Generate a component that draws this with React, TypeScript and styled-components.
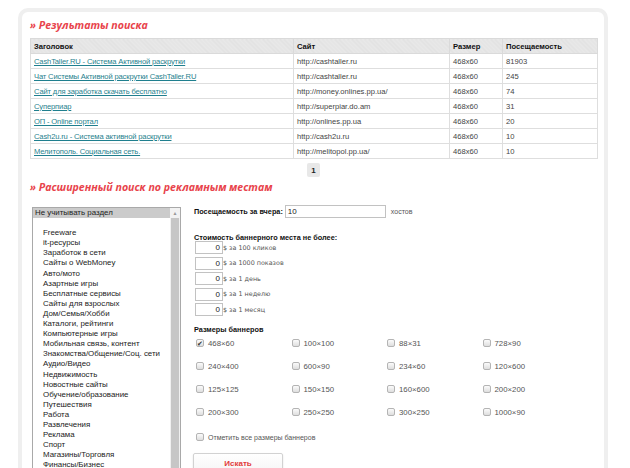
import styled, { createGlobalStyle } from 'styled-components'

const GlobalStyle = createGlobalStyle`
  html, body {
    margin: 0;
    padding: 0;
    background: #ffffff;
    overflow: hidden;
  }
  body {
    font-family: "Liberation Sans", Arial, sans-serif;
    color: #222;
  }
`

const results = [
  { title: 'CashTaller.RU - Система Активной раскрутки', site: 'http://cashtaller.ru', size: '468x60', visits: '81903' },
  { title: 'Чат Системы Активной раскрутки CashTaller.RU', site: 'http://cashtaller.ru', size: '468x60', visits: '245' },
  { title: 'Сайт для заработка скачать бесплатно', site: 'http://money.onlines.pp.ua/', size: '468x60', visits: '74' },
  { title: 'Суперпиар', site: 'http://superpiar.do.am', size: '468x60', visits: '31' },
  { title: 'ОП - Online портал', site: 'http://onlines.pp.ua', size: '468x60', visits: '20' },
  { title: 'Cash2u.ru - Система активной раскрутки', site: 'http://cash2u.ru', size: '468x60', visits: '10' },
  { title: 'Мелитополь. Социальная сеть.', site: 'http://melitopol.pp.ua/', size: '468x60', visits: '10' },
]

const categories = [
  'Freeware', 'it-ресурсы', 'Заработок в сети', 'Сайты о WebMoney', 'Авто/мото',
  'Азартные игры', 'Бесплатные сервисы', 'Сайты для взрослых', 'Дом/Семья/Хобби',
  'Каталоги, рейтинги', 'Компьютерные игры', 'Мобильная связь, контент',
  'Знакомства/Общение/Соц. сети', 'Аудио/Видео', 'Недвижимость', 'Новостные сайты',
  'Обучение/образование', 'Путешествия', 'Работа', 'Развлечения', 'Реклама', 'Спорт',
  'Магазины/Торговля', 'Финансы/Бизнес', 'Хостинг', 'Юмор',
]

const costs = ['$ за 100 кликов', '$ за 1000 показов', '$ за 1 день', '$ за 1 неделю', '$ за 1 месяц']

const sizes = [
  '468×60', '100×100', '88×31', '728×90',
  '240×400', '600×90', '234×60', '120×600',
  '125×125', '150×150', '160×600', '200×200',
  '200×300', '250×250', '300×250', '1000×90',
]

const Card = styled.div`
  margin: 8px 0 0 18px;
  width: 567px;
  min-height: 520px;
  border: 4px solid #efefef;
  border-radius: 10px;
  padding: 5px 7px 0 8px;
  box-sizing: content-box;
`

const SectionTitle = styled.h2`
  margin: 0;
  height: 16px;
  font-size: 10.6px;
  line-height: 16px;
  font-weight: bold;
  font-style: italic;
  color: #e8434b;
  font-family: "Open Sans", "Liberation Sans", sans-serif;
  white-space: nowrap;
`

const Table = styled.table`
  margin-top: 5px;
  width: 567px;
  border-collapse: collapse;
  table-layout: fixed;
  font-size: 7.6px;
`

const HeadCell = styled.th<{ $w: number }>`
  box-sizing: border-box;
  width: ${p => p.$w}px;
  height: 15px;
  padding: 0 3px;
  text-align: left;
  font-weight: bold;
  color: #111;
  border: 1px solid #dadada;
  background: repeating-linear-gradient(45deg, #e8e8e8 0 2px, #e1e1e1 2px 3px);
`

const Cell = styled.td`
  height: 14px;
  padding: 0 3px;
  border: 1px solid #dedede;
  color: #444;
  white-space: nowrap;
  overflow: hidden;
`

const TitleLink = styled.a`
  color: #1f7f8e;
  text-decoration: underline;
  letter-spacing: -0.15px;
`

const Pager = styled.div`
  display: flex;
  justify-content: center;
  margin: 4px 0 2px;
  width: 567px;
`

const PageNum = styled.span`
  display: flex;
  align-items: center;
  justify-content: center;
  width: 13px;
  height: 14px;
  border-radius: 2px;
  background: #e8e8e8;
  font-size: 8px;
  font-weight: bold;
  color: #222;
`

const SearchArea = styled.div`
  display: grid;
  grid-template-columns: 149px 1fr;
  column-gap: 13px;
  margin-top: 10px;
  padding-left: 2px;
  align-items: start;
`

const ListBox = styled.div`
  margin-top: 2px;
  height: 300px;
  border: 1px solid #a9a9a9;
  display: flex;
  font-size: 7.9px;
  color: #222;
`

const Options = styled.div`
  flex: 1;
`

const Option = styled.div<{ $selected?: boolean; $indent?: boolean }>`
  height: 10.1px;
  line-height: 10.1px;
  padding-left: ${p => (p.$indent ? 10 : 2)}px;
  background: ${p => (p.$selected ? '#cbcbcb' : 'transparent')};
  white-space: nowrap;
  overflow: hidden;
`

const ScrollBar = styled.div`
  width: 10px;
  display: flex;
  flex-direction: column;
  background: #f0f0f0;
`

const ScrollArrow = styled.div`
  height: 10px;
  display: flex;
  align-items: center;
  justify-content: center;
  font-size: 5px;
  color: #999;
  background: #f2f2f2;
`

const ScrollThumb = styled.div`
  flex: 1;
  margin: 0 1px;
  background: #c6c6c6;
`

const Form = styled.div`
  display: flex;
  flex-direction: column;
`

const InlineRow = styled.div`
  display: flex;
  align-items: center;
  height: 13px;
`

const BoldLabel = styled.span`
  font-size: 7.3px;
  font-weight: bold;
  color: #111;
  white-space: nowrap;
`

const TextInput = styled.div<{ $w: number; $right?: boolean }>`
  box-sizing: border-box;
  width: ${p => p.$w}px;
  height: 13px;
  border: 1px solid #c2c2c2;
  background: #fff;
  font-size: 8px;
  line-height: 11px;
  padding: 0 2px;
  text-align: ${p => (p.$right ? 'right' : 'left')};
  color: #222;
`

const SmallNote = styled.span`
  font-size: 7px;
  color: #555;
  margin-left: 5px;
`

const GroupLabel = styled.div<{ $top: number }>`
  margin-top: ${p => p.$top}px;
  height: 10px;
  line-height: 10px;
`

const CostList = styled.div`
  display: flex;
  flex-direction: column;
  gap: 2.5px;
  margin-top: 1px;
  padding-left: 1px;
`

const CostText = styled.span`
  font-family: "DejaVu Sans", Verdana, sans-serif;
  font-size: 6.4px;
  color: #555;
`

const SizeGrid = styled.div`
  display: grid;
  grid-template-columns: repeat(4, 95.5px);
  grid-auto-rows: 12px;
  row-gap: 11px;
  margin-top: 5px;
  padding-left: 2px;
`

const CheckItem = styled.label<{ $size: number }>`
  display: flex;
  align-items: center;
  gap: 4px;
  font-size: ${p => p.$size}px;
  color: #555;
  white-space: nowrap;
`

const Box = styled.span`
  box-sizing: border-box;
  width: 8px;
  height: 8px;
  border: 1px solid #b4b4b4;
  border-radius: 2px;
  background: linear-gradient(#fbfbfb, #dedede);
  display: flex;
  align-items: center;
  justify-content: center;
  font-size: 7px;
  line-height: 1;
  color: #333;
`

const CheckAllRow = styled.div`
  margin-top: 13px;
  height: 12px;
  padding-left: 2px;
  display: flex;
`

const SearchButton = styled.button`
  margin-top: 10px;
  margin-left: -1px;
  width: 90px;
  height: 26px;
  border: 1px solid #d2d2d2;
  border-radius: 2px;
  background: linear-gradient(#ffffff, #f3f3f3);
  box-shadow: 0 1px 2px rgba(0, 0, 0, 0.12);
  color: #e23b3b;
  font-family: "Liberation Sans", Arial, sans-serif;
  font-size: 8px;
  font-weight: bold;
  padding: 0 0 6px;
  text-align: center;
  align-self: flex-start;
`

function CheckBox({ label, checked, size = 7.8 }: { label: string; checked?: boolean; size?: number }) {
  return (
    <CheckItem $size={size}>
      <Box>{checked ? '✔' : ''}</Box>
      {label}
    </CheckItem>
  )
}

export default function App() {
  return (
    <>
      <GlobalStyle />
      <Card>
        <SectionTitle>» Результаты поиска</SectionTitle>
        <Table>
          <thead>
            <tr>
              <HeadCell $w={263}>Заголовок</HeadCell>
              <HeadCell $w={156}>Сайт</HeadCell>
              <HeadCell $w={53}>Размер</HeadCell>
              <HeadCell $w={95}>Посещаемость</HeadCell>
            </tr>
          </thead>
          <tbody>
            {results.map(r => (
              <tr key={r.title}>
                <Cell>
                  <TitleLink href="#">{r.title}</TitleLink>
                </Cell>
                <Cell>{r.site}</Cell>
                <Cell>{r.size}</Cell>
                <Cell>{r.visits}</Cell>
              </tr>
            ))}
          </tbody>
        </Table>
        <Pager>
          <PageNum>1</PageNum>
        </Pager>
        <SectionTitle>» Расширенный поиск по рекламным местам</SectionTitle>

        <SearchArea>
          <ListBox>
            <Options>
              <Option $selected>Не учитывать раздел</Option>
              <Option />
              {categories.map(c => (
                <Option key={c} $indent>
                  {c}
                </Option>
              ))}
            </Options>
            <ScrollBar>
              <ScrollArrow>▲</ScrollArrow>
              <ScrollThumb />
            </ScrollBar>
          </ListBox>

          <Form>
            <InlineRow>
              <BoldLabel>Посещаемость за вчера:</BoldLabel>
              <TextInput $w={101} style={{ marginLeft: 2 }}>10</TextInput>
              <SmallNote>хостов</SmallNote>
            </InlineRow>

            <GroupLabel $top={12}>
              <BoldLabel>Стоимость баннерного места не более:</BoldLabel>
            </GroupLabel>
            <CostList>
              {costs.map(c => (
                <InlineRow key={c}>
                  <TextInput $w={28} $right>0</TextInput>
                  <CostText>{c}</CostText>
                </InlineRow>
              ))}
            </CostList>

            <GroupLabel $top={6}>
              <BoldLabel>Размеры баннеров</BoldLabel>
            </GroupLabel>
            <SizeGrid>
              {sizes.map((s, i) => (
                <CheckBox key={s} label={s} checked={i === 0} />
              ))}
            </SizeGrid>

            <CheckAllRow>
              <CheckBox label="Отметить все размеры баннеров" size={7} />
            </CheckAllRow>

            <SearchButton>Искать</SearchButton>
          </Form>
        </SearchArea>
      </Card>
    </>
  )
}
